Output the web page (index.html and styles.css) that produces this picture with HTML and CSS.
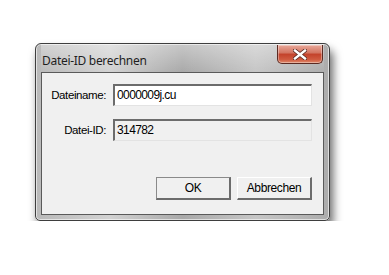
FILE: index.html
```html
<!DOCTYPE html>
<html>
<head>
	<title>Datei-ID berechnen</title>
	<link rel="stylesheet" href="styles.css">
</head>
<body>
	<div class="window">
		<div class="titlebar">
			<span class="title">Datei-ID berechnen</span>
			<div class="close">
				<svg width="14" height="11" viewBox="0 0 14 11">
					<path d="M2 1.5 L12 9.5 M12 1.5 L2 9.5" stroke="#5a2a22" stroke-width="4" stroke-linecap="square"/>
					<path d="M2 1.5 L12 9.5 M12 1.5 L2 9.5" stroke="#ffffff" stroke-width="2.4" stroke-linecap="square"/>
				</svg>
			</div>
		</div>
		<div class="client">
			<div class="form">
				<label>Dateiname:</label>
				<div class="field">0000009j.cu</div>
				<label>Datei-ID:</label>
				<div class="field readonly">314782</div>
			</div>
			<div class="buttons">
				<div class="button default">OK</div>
				<div class="button">Abbrechen</div>
			</div>
		</div>
	</div>
</body>
</html>
```

FILE: styles.css
```css
* {
	margin: 0;
	box-sizing: border-box;
}
body {
	background: #ffffff;
	padding: 43px 0 0 35px;
	font-family: "Liberation Sans", Arial, sans-serif;
}

/* window frame */
div.window {
	width: 295px;
	height: 178px;
	border: 1px solid #3e3e3e;
	border-radius: 6px 6px 5px 5px;
	background: linear-gradient(to right, #b9b9b9 0%, #d2d2d2 25%, #a9a9a9 50%, #c6c6c6 75%, #acacac 100%);
	box-shadow: 3px 7px 10px rgba(0, 0, 0, .6), inset 0 0 0 1px rgba(255, 255, 255, .6);
	padding: 0 5px 5px 5px;
	display: flex;
	flex-direction: column;
}
div.titlebar {
	height: 28px;
	display: flex;
	justify-content: space-between;
	align-items: flex-start;
	background: linear-gradient(to bottom, rgba(255, 255, 255, .35), rgba(255, 255, 255, 0));
}
span.title {
	font-family: "Noto Sans", sans-serif;
	font-size: 12px;
	color: #1e1e1e;
	padding: 8px 0 0 1px;
	letter-spacing: -0.3px;
}
div.close {
	width: 46px;
	height: 19px;
	margin: 1px 1px 0 0;
	border: 1px solid #5b2a22;
	border-top: none;
	border-radius: 0 0 5px 5px;
	background: linear-gradient(to bottom, #e9a89a 0%, #d2735f 45%, #c3412a 50%, #cf5a3f 80%, #e08a6c 100%);
	box-shadow: inset 0 0 0 1px rgba(255, 255, 255, .35);
	display: flex;
	align-items: center;
	justify-content: center;
}

/* client area */
div.client {
	flex: 1;
	background: #f0f0f0;
	border: 1px solid #5a5a5a;
	padding: 11px 11px 0 0;
	display: flex;
	flex-direction: column;
}
div.form {
	display: grid;
	grid-template-columns: 64px 199px;
	column-gap: 7px;
	row-gap: 13px;
	align-items: center;
}
label {
	text-align: right;
	font-size: 11.5px;
	letter-spacing: -0.4px;
	color: #000;
}
div.field {
	height: 22px;
	background: #ffffff;
	border-top: 2px solid #6c6c6c;
	border-left: 2px solid #6c6c6c;
	border-right: 1px solid #e3e3e3;
	border-bottom: 1px solid #e3e3e3;
	font-size: 12px;
	letter-spacing: -0.6px;
	padding: 2px 0 0 2px;
	color: #000;
}
div.readonly {
	background: #f0f0f0;
}

/* buttons */
div.buttons {
	display: flex;
	justify-content: flex-end;
	gap: 6px;
	margin-top: 36px;
}
div.button {
	width: 75px;
	height: 23px;
	background: #f0f0f0;
	border-top: 1px solid #ffffff;
	border-left: 1px solid #ffffff;
	border-right: 2px solid #6c6c6c;
	border-bottom: 2px solid #6c6c6c;
	font-size: 12px;
	letter-spacing: -0.4px;
	display: flex;
	align-items: center;
	justify-content: center;
	color: #000;
}
div.default {
	border-top: 1px solid #8a8a8a;
	border-left: 1px solid #8a8a8a;
}
```
